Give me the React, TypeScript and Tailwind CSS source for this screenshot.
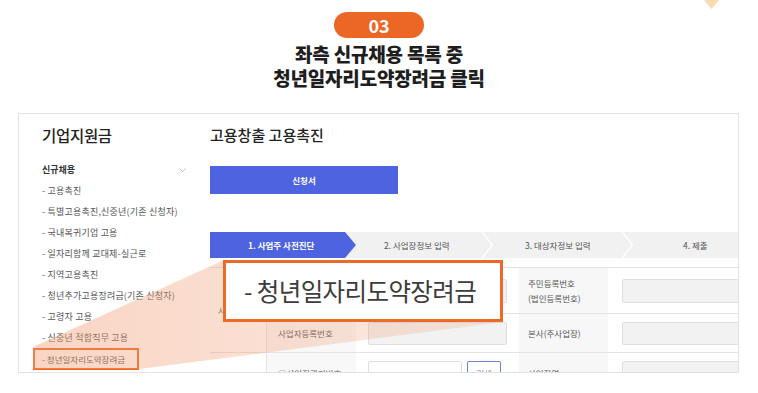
import React from "react";

const sideItems = [
  "- 고용촉진",
  "- 특별고용촉진,신중년(기존 신청자)",
  "- 국내복귀기업 고용",
  "- 일자리함께 교대제-실근로",
  "- 지역고용촉진",
  "- 청년추가고용장려금(기존 신청자)",
  "- 고령자 고용",
  "- 신중년 적합직무 고용",
];

function Sep() {
  return (
    <svg width="11" height="26" viewBox="0 0 11 26" className="shrink-0">
      <polyline points="0,0 10.5,13 0,26" fill="none" stroke="#ffffff" strokeWidth="1.5" />
    </svg>
  );
}

export default function App() {
  return (
    <div className="relative w-[758px] h-[393px] overflow-hidden bg-white font-['Noto_Sans_CJK_KR','Noto_Sans',sans-serif]">
      {/* top-right decorative triangle */}
      <svg className="absolute left-[704px] top-0" width="16" height="10" viewBox="0 0 16 10">
        <polygon points="0,0 15,0 7.5,9" fill="#f7dcb3" />
      </svg>

      {/* header */}
      <div className="flex flex-col items-center pt-[12px]">
        <div className="flex h-[26px] w-[90px] items-center justify-center rounded-full bg-[#ec6726] text-[18px] font-bold leading-none text-white">
          03
        </div>
        <div className="mt-[4px] text-center text-[19px] font-black leading-[24px] tracking-[-0.2px] text-[#1e1e1e]">
          <div>좌측 신규채용 목록 중</div>
          <div>청년일자리도약장려금 클릭</div>
        </div>
      </div>

      {/* screenshot panel */}
      <div className="ml-[18px] mt-[23px] flex h-[260px] w-[721px] overflow-hidden border border-[#e3e3e3]">
        {/* sidebar */}
        <div className="w-[191px] shrink-0 pl-[23px] pr-[24px] pt-[9px]">
          <div className="text-[15.5px] font-medium leading-[24px] tracking-[-0.3px] text-[#222]">기업지원금</div>
          <div className="mt-[12px] flex h-[21px] items-center justify-between">
            <span className="text-[9px] font-bold text-[#333]">신규채용</span>
            <svg width="7" height="4" viewBox="0 0 7 4">
              <polyline points="0.5,0.5 3.5,3.5 6.5,0.5" fill="none" stroke="#aaa" strokeWidth="0.8" />
            </svg>
          </div>
          {sideItems.map((t) => (
            <div key={t} className="flex h-[21px] items-center whitespace-nowrap text-[9px] tracking-[0.2px] text-[#555]">
              {t}
            </div>
          ))}
          <div className="ml-[-9px] flex h-[22px] w-[106px] items-center whitespace-nowrap border-2 border-[#ec6a26] pl-[7px] text-[8.5px] text-[#555]">
            - 청년일자리도약장려금
          </div>
        </div>

        {/* main */}
        <div className="w-[528px] shrink-0 pt-[10px]">
          <div className="text-[15px] font-medium leading-[22px] text-[#222]">고용창출 고용촉진</div>
          <div className="mt-[20px] flex h-[28px] w-[188px] items-center justify-center bg-[#4d63df] text-[8.5px] font-bold text-white">
            신청서
          </div>

          {/* steps */}
          <div className="mt-[38px] flex h-[26px] items-center bg-[#f1f1f1] text-[8.5px] text-[#555]">
            <div className="flex h-full w-[146px] shrink-0 items-center bg-[#4d63df] pl-[38px] font-bold text-white [clip-path:polygon(0_0,135px_0,146px_50%,135px_100%,0_100%)]">
              1. 사업주 사전진단
            </div>
            <div className="flex h-full w-[126px] shrink-0 items-center pl-[28px]">2. 사업장정보 입력</div>
            <Sep />
            <div className="flex h-full w-[129px] shrink-0 items-center pl-[32px]">3. 대상자정보 입력</div>
            <Sep />
            <div className="flex h-full flex-1 items-center pl-[50px]">4. 제출</div>
          </div>

          {/* table */}
          <div className="mt-[9px] grid grid-cols-[57px_89px_163px_89px_130px] grid-rows-[46px_39px_40px] border-t border-[#e3e3e3] text-[8.5px] text-[#555]">
            <div className="row-span-2 flex items-center border-b border-r border-[#e3e3e3] pl-[8px]">사업장</div>
            <div className="flex items-center border-b border-[#e3e3e3] bg-[#f8f8f8] pl-[11px]">대표자명</div>
            <div className="flex items-center border-b border-[#e3e3e3] pl-[12px]">
              <div className="h-[24px] w-[139px] rounded-[2px] border border-[#dedede] bg-[#f2f2f2]" />
            </div>
            <div className="flex flex-col justify-center border-b border-[#e3e3e3] bg-[#f7f7f7] pl-[9px] leading-[15px]">
              <span>주민등록번호</span>
              <span>(법인등록번호)</span>
            </div>
            <div className="flex items-center border-b border-[#e3e3e3] pl-[14px]">
              <div className="h-[24px] w-[140px] shrink-0 rounded-[2px] border border-[#dedede] bg-[#f2f2f2]" />
            </div>

            <div className="flex items-center border-b border-[#e3e3e3] bg-[#f8f8f8] pl-[11px]">사업자등록번호</div>
            <div className="flex items-center border-b border-[#e3e3e3] pl-[12px]">
              <div className="h-[23px] w-[139px] rounded-[2px] border border-[#dedede] bg-[#f2f2f2]" />
            </div>
            <div className="flex items-center border-b border-[#e3e3e3] bg-[#f7f7f7] pl-[9px]">본사(주사업장)</div>
            <div className="flex items-center border-b border-[#e3e3e3] pl-[14px]">
              <div className="h-[23px] w-[140px] shrink-0 rounded-[2px] border border-[#dedede] bg-[#f2f2f2]" />
            </div>

            <div className="border-r border-[#e3e3e3]" />
            <div className="flex items-center bg-[#f8f8f8] pl-[11px]">①사업장관리번호</div>
            <div className="flex items-center pl-[12px]">
              <div className="h-[24px] w-[94px] rounded-[2px] border border-[#dedede] bg-white" />
              <div className="ml-[5px] flex h-[24px] w-[34px] items-center justify-center rounded-[2px] border border-[#6a7fd8] bg-white text-[#6a7fd8]">
                검색
              </div>
            </div>
            <div className="flex items-center bg-[#f7f7f7] pl-[9px]">사업장명</div>
            <div className="flex items-center pl-[14px]">
              <div className="h-[24px] w-[140px] shrink-0 rounded-[2px] border border-[#dedede] bg-[#f2f2f2]" />
            </div>
          </div>
        </div>
      </div>

      {/* annotation fan */}
      <svg className="pointer-events-none absolute left-0 top-0" width="758" height="393" viewBox="0 0 758 393">
        <defs>
          <linearGradient id="fan" x1="0" y1="0" x2="1" y2="0">
            <stop offset="0" stopColor="#f19a70" stopOpacity="0.42" />
            <stop offset="1" stopColor="#f19a70" stopOpacity="0.2" />
          </linearGradient>
        </defs>
        <polygon points="33,347 224,260 503,322 139,369 33,369" fill="url(#fan)" />
      </svg>

      {/* callout */}
      <div className="absolute left-[223px] top-[260px] flex h-[62px] w-[280px] items-center whitespace-nowrap border-[3.5px] border-[#ec6a26] bg-white pl-[18px] text-[24.5px] leading-none tracking-[-0.6px] text-[#3c3c3c]">
        - 청년일자리도약장려금
      </div>
    </div>
  );
}
